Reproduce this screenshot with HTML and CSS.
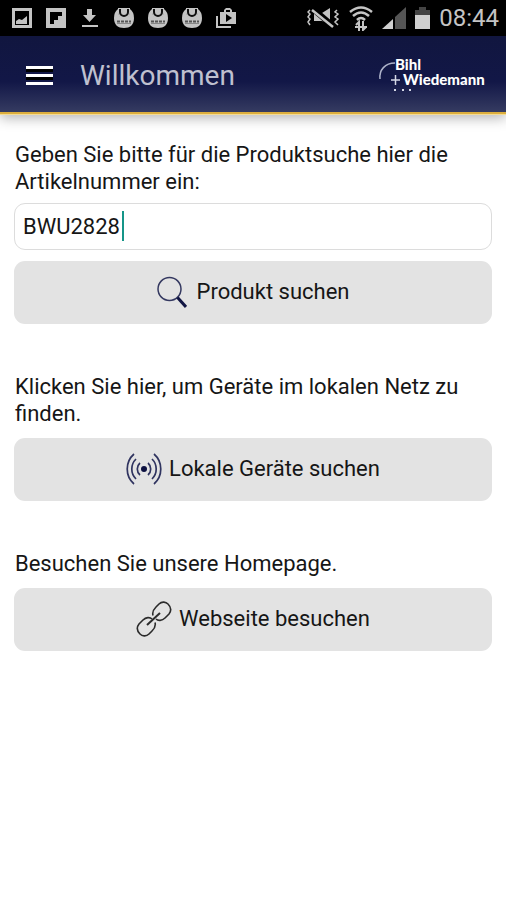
FILE: index.html
```html
<!DOCTYPE html>
<html lang="de">
<head>
<meta charset="utf-8">
<meta name="viewport" content="width=device-width, initial-scale=1">
<title>Willkommen</title>
<link rel="stylesheet" href="styles.css">
</head>
<body>
<svg class="defs" aria-hidden="true">
  <symbol id="app" viewBox="0 0 20 20">
    <path fill="#c4c4c4" d="M4 1Q0 4 0 10c0 7 4 10 10 10s10-3 10-10Q20 4 16 1v3a6 6 0 0 1-12 0z"/>
    <path fill="#c4c4c4" d="M4 0h12v5a6 6 0 0 1-12 0z"/>
    <path fill="none" stroke="#111" stroke-width="2" d="M6 1v3a4 4 0 0 0 8 0V1"/>
    <path fill="none" stroke="#555" stroke-width="2" stroke-dasharray="3 1" d="M3 13.500h14"/>
    <path stroke="#888" d="M3 15.500h14"/>
  </symbol>
</svg>
<div class="status">
  <div class="icons">
    <svg width="20" height="20" viewBox="0 0 20 20"><path fill="#c4c4c4" fill-rule="evenodd" d="M0 0h20v20H0zM3 3v14h14V3z"/><path fill="#c4c4c4" d="M4 16v-3l3-2 3 1 5-4v8z"/></svg>
    <svg width="20" height="20" viewBox="0 0 20 20"><path fill="#c4c4c4" fill-rule="evenodd" d="M0 0h20v20H0zM4 4v12h4v-4h4V8h4V4z"/></svg>
    <svg width="20" height="20" viewBox="0 0 20 20"><path fill="#c4c4c4" d="M7 1h5v6h4l-6.500 7L3 7h4zM2 17h16v2H2z"/></svg>
    <svg width="20" height="20"><use href="#app"/></svg>
    <svg width="20" height="20"><use href="#app"/></svg>
    <svg width="20" height="20"><use href="#app"/></svg>
    <svg width="20" height="20" viewBox="0 0 20 20"><path fill="#c4c4c4" fill-rule="evenodd" d="M4 4h4V2l2-2h4l2 2v2h4v12H4zM10 2v2h4V2zM10 6v8l6-4z"/><path fill="none" stroke="#c4c4c4" stroke-width="2" d="M1 8v11h14"/></svg>
  </div>
  <div class="icons system">
    <svg width="33" height="20" viewBox="0 0 33 20"><path fill="#c4c4c4" d="M7 5h8l8-5v16L15 13H7z"/><path fill="none" stroke="#000" stroke-width="6" d="M6 1l20 17"/><path fill="none" stroke="#c4c4c4" stroke-width="2.500" d="M5 2l21 17"/><path fill="none" stroke="#c4c4c4" stroke-width="1.500" d="M3 2L1 4l2 2-2 3 2 2-2 3 2 3M30 2l-2 2 3 2-3 3 3 2-3 3 3 3"/></svg>
    <svg width="24" height="26" viewBox="0 0 24 26"><path fill="none" stroke="#c4c4c4" stroke-width="2.500" d="M1 7q11-9 22 0M4 11q8-7 16 0M8 15q4-4 8 0"/><path fill="none" stroke="#c4c4c4" stroke-width="2" d="M10 26V17l-3 3M14 16v9l3-3M6 22h12"/></svg>
    <svg width="24" height="22" viewBox="0 0 24 22"><path fill="#555" d="M13 10L24 0v22H13z"/><path fill="#d0d0d0" d="M0 22l11-10v10z"/></svg>
    <svg width="15" height="22" viewBox="0 0 15 22"><path fill="#444" d="M4 0h7v3h4v5H0V3h4z"/><path fill="#d0d0d0" d="M0 8h15v14H0z"/></svg>
    <time>08:44</time>
  </div>
</div>
<header class="bar">
  <button class="menu" type="button" aria-label="Menü"><svg width="27" height="20" viewBox="0 0 27 20"><path fill="#000" d="M0 3h27v3H0zM0 11h27v3H0z"/><path fill="#fff" d="M0 0h27v3H0zM0 8h27v3H0zM0 16h27v3H0z"/></svg></button>
  <h1>Willkommen</h1>
  <svg class="logo" width="110" height="40" viewBox="0 0 110 40" role="img" aria-label="Bihl + Wiedemann">
    <path fill="none" stroke="#aeb3ca" stroke-width="1.500" d="M2 23C1 14 7 7 17 7"/>
    <text x="17" y="14">Bihl</text><text x="25" y="29">Wiedemann</text>
    <path fill="none" stroke="#d5d8e6" stroke-width="1.500" d="M13 24h9M17.500 19v10"/>
    <path fill="#d5d8e6" d="M16 33h2v2h-2zM24 33h2v2h-2zM31 33h2v2h-2z"/>
  </svg>
</header>
<main>
  <form class="block">
    <label for="article">Geben Sie bitte für die Produktsuche hier die Artikelnummer ein:</label>
    <div class="field"><input id="article" type="text" value="BWU2828"><span class="caret"></span></div>
    <button class="action wide" type="button">
      <svg width="30" height="32" viewBox="0 0 30 32"><circle cx="12.500" cy="13" r="11.500" fill="none" stroke="#343860" stroke-width="1.500"/><path stroke="#111543" stroke-width="3" d="M20.500 21.500L29 31"/></svg>
      Produkt suchen
    </button>
  </form>
  <section class="block">
    <p>Klicken Sie hier, um Geräte im lokalen Netz zu finden.</p>
    <button class="action" type="button">
      <svg width="36" height="32" viewBox="0 0 36 32"><circle cx="18" cy="16" r="3" fill="#0c1040"/><path fill="none" stroke="#303460" stroke-width="1.700" d="M14 10a8 8 0 0 0 0 12M10 6a14 14 0 0 0 0 20M8 1a20 20 0 0 0 0 30M22 10a8 8 0 0 1 0 12M26 6a14 14 0 0 1 0 20M28 1a20 20 0 0 1 0 30"/></svg>
      Lokale Geräte suchen
    </button>
  </section>
  <section class="block">
    <p>Besuchen Sie unsere Homepage.</p>
    <a class="action" href="#">
      <svg width="36" height="36" viewBox="0 0 36 36"><g fill="none" stroke="#2b2b2b" stroke-width="1.600"><path d="M17 14.500C16 11 17 9 20 6l3-3c3-3 7-2 9 0 3 3 4 6 1 10l-4 4c-3 3-7 3-9 1"/><path d="M19 21.500c1 3.500 0 5.500-3 8.500l-3 3c-3 3-7 2-9 0-3-3-4-6-1-10l4-4c3-3 7-3 9-1"/><path d="M11 24l13-12" stroke-width="2"/></g></svg>
      Webseite besuchen
    </a>
  </section>
</main>
</body>
</html>
```
FILE: styles.css
```css
* {
  box-sizing: border-box;
}

body {
  margin: 0;
  background: #fff;
  color: #161616;
  font: 22px/27px Roboto, "Liberation Sans", sans-serif;
}

.defs {
  position: absolute;
  width: 0;
  height: 0;
}

.status {
  display: flex;
  align-items: center;
  justify-content: space-between;
  height: 36px;
  padding: 0 7px 0 12px;
  background: #000;
  color: #c4c4c4;
}

.icons {
  display: flex;
  align-items: center;
  gap: 14px;
}

.system {
  gap: 9px;
}

time {
  font-size: 24px;
}

.bar {
  display: flex;
  align-items: center;
  height: 78px;
  padding: 3px 18px 0 26px;
  border-bottom: 2px solid #dcae3e;
  background: linear-gradient(#11163f, #121747 60%, #353b61);
  box-shadow: 0 1px 0 #f5dc95, 0 4px 12px rgba(0, 0, 0, 0.3);
}

.menu {
  display: flex;
  padding: 0;
  border: 0;
  background: none;
}

h1 {
  flex: 1;
  margin: 0 0 0 27px;
  color: #bfc0cf;
  font-size: 28px;
  font-weight: 400;
}

.logo text {
  fill: #fff;
  font: 900 15px Lato, sans-serif;
}

main {
  display: flex;
  flex-direction: column;
  gap: 49px;
  padding: 27px 14px;
}

.block {
  display: flex;
  flex-direction: column;
  gap: 11px;
}

label,
p {
  margin: 0;
  padding-left: 1px;
}

.field {
  position: relative;
  margin-top: -3px;
}

input {
  display: block;
  width: 100%;
  height: 47px;
  padding: 0 8px;
  border: 1px solid #dcdcdc;
  border-radius: 11px;
  background: #fff;
  color: inherit;
  font: inherit;
}

.caret {
  position: absolute;
  top: 8px;
  left: 108px;
  width: 2px;
  height: 30px;
  background: #159588;
}

.action {
  display: flex;
  align-items: center;
  justify-content: center;
  gap: 7px;
  height: 63px;
  padding: 0 0 2px;
  border: 0;
  border-radius: 11px;
  background: #e3e3e3;
  color: inherit;
  font: inherit;
  text-decoration: none;
}

.wide {
  gap: 10px;
}
```
